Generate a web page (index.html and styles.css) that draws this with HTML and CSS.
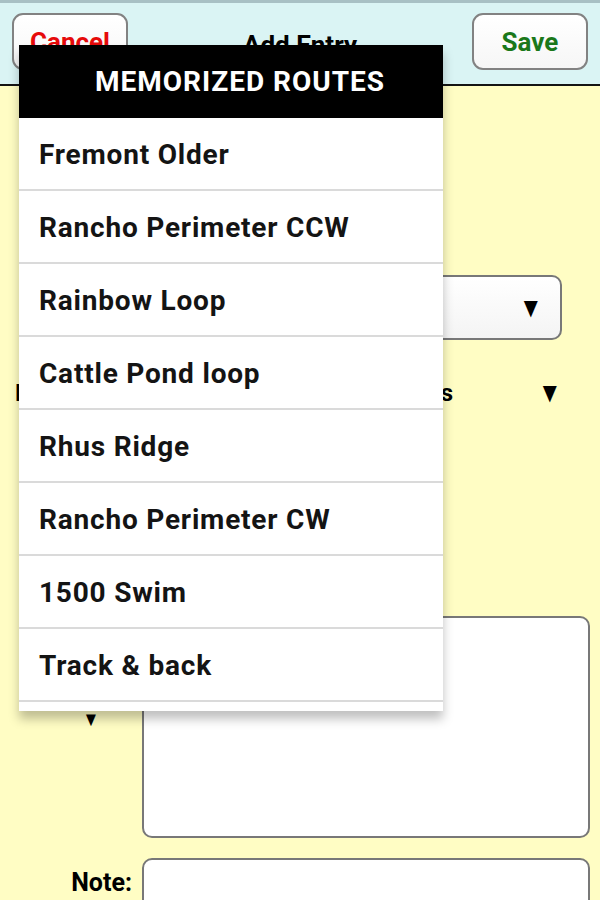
FILE: index.html
```html
<!DOCTYPE html>
<html lang="en">

<head>
    <meta charset="UTF-8">
    <meta name="viewport" content="width=device-width, initial-scale=1.0">
    <title>Add Entry</title>
    <link rel="stylesheet" href="styles.css">
</head>

<body>
    <header class="topbar">
        <button class="btn btn-cancel">Cancel</button>
        <h1>Add Entry</h1>
        <button class="btn btn-save">Save</button>
    </header>

    <div class="form">
        <div class="row row-date"></div>
        <div class="row row-time"></div>
        <div class="row row-route">
            <span></span>
            <div class="select"><span class="arrow">&#9660;</span></div>
        </div>
        <div class="row row-dist">
            <div class="dist-text">
                <span>Distance:</span>
                <span>3.50 miles</span>
            </div>
            <span class="arrow">&#9660;</span>
        </div>
        <div class="row row-pace"></div>
        <div class="row row-memo">
            <div class="memo-label">
                <span class="arrow small">&#9660;</span>
            </div>
            <div class="textarea"></div>
        </div>
        <div class="row row-note">
            <label>Note:</label>
            <div class="input"></div>
        </div>
    </div>

    <!-- popup list over the form -->
    <div class="popup">
        <div class="popup-title">MEMORIZED ROUTES</div>
        <ul>
            <li>Fremont Older</li>
            <li>Rancho Perimeter CCW</li>
            <li>Rainbow Loop</li>
            <li>Cattle Pond loop</li>
            <li>Rhus Ridge</li>
            <li>Rancho Perimeter CW</li>
            <li>1500 Swim</li>
            <li>Track &amp; back</li>
            <li class="cut"></li>
        </ul>
    </div>
</body>

</html>
```

FILE: styles.css
```css
body {
    font-family: Roboto, "Liberation Sans", sans-serif;
    margin: 0px;
    background-color: rgb(255, 253, 196);
    color: black;
    height: 900px;
    overflow: hidden;
}

.topbar {
    height: 81px;
    border-top: 3px solid rgb(168, 192, 196);
    border-bottom: 2px solid rgb(20, 20, 20);
    background-color: rgb(218, 244, 244);
    display: flex;
    align-items: flex-start;
    justify-content: space-between;
    padding: 0px 12px;
}

.topbar h1 {
    margin: 0px;
    font-size: 26px;
    font-weight: bold;
    line-height: 80px;
    margin-top: 2px;
}

.btn {
    margin-top: 10px;
    width: 116px;
    height: 57px;
    background: linear-gradient(white, rgb(246, 246, 246));
    border: 2px solid rgb(130, 130, 130);
    border-radius: 11px;
    font-family: Roboto, "Liberation Sans", sans-serif;
    font-size: 26px;
    font-weight: bold;
    padding: 0px;
}

.btn-cancel {
    color: rgb(230, 10, 10);
}

.btn-save {
    color: rgb(26, 120, 26);
}

.form {
    padding-right: 10px;
}

.row {
    display: grid;
    grid-template-columns: 132px 1fr;
    column-gap: 10px;
    align-items: center;
    font-size: 26px;
    font-weight: bold;
    white-space: nowrap;
}

.row label {
    text-align: right;
}

.row-date {
    height: 70px;
}

.row-time {
    height: 117px;
}

.row-route {
    height: 69px;
}

.select {
    height: 61px;
    margin-right: 28px;
    background: linear-gradient(white, rgb(244, 244, 244));
    border: 2px solid rgb(120, 120, 120);
    border-radius: 10px;
    display: flex;
    align-items: center;
    justify-content: flex-end;
    padding-right: 15px;
}

.arrow {
    font-size: 28px;
    line-height: 1;
    transform: scaleX(0.85);
}

.row-dist {
    height: 102px;
    display: flex;
    justify-content: space-between;
    padding-left: 15px;
    padding-right: 26px;
    align-items: center;
}

.dist-text {
    width: 438px;
    display: flex;
    justify-content: space-between;
    font-size: 24px;
}

.row-pace {
    height: 172px;
}

.row-memo {
    align-items: start;
    height: 242px;
}

.memo-label {
    display: flex;
    justify-content: flex-end;
    padding-right: 31px;
    padding-top: 93px;
}

.arrow.small {
    font-size: 20px;
}

.textarea {
    height: 218px;
    background: white;
    border: 2px solid rgb(120, 120, 120);
    border-radius: 10px;
}

.row-note {
    align-items: start;
}

.row-note label {
    padding-top: 10px;
    font-size: 25px;
}

.input {
    height: 60px;
    background: white;
    border: 2px solid rgb(120, 120, 120);
    border-radius: 10px;
}

.popup {
    position: absolute;
    top: 45px;
    left: 19px;
    width: 424px;
    background-color: white;
    box-shadow: 0px 8px 10px rgba(0, 0, 0, 0.25);
}

.popup-title {
    height: 73px;
    background-color: black;
    color: white;
    font-size: 28px;
    letter-spacing: 1px;
    font-weight: bold;
    line-height: 73px;
    text-align: center;
    padding-left: 18px;
}

.popup ul {
    list-style: none;
    margin: 0px;
    padding: 0px;
}

.popup li {
    height: 71px;
    line-height: 73px;
    border-bottom: 2px solid rgb(218, 218, 218);
    padding-left: 20px;
    font-size: 28px;
    letter-spacing: 0.8px;
    font-weight: bold;
    color: rgb(20, 20, 20);
}

.popup li.cut {
    height: 9px;
    border-bottom: none;
}
```
